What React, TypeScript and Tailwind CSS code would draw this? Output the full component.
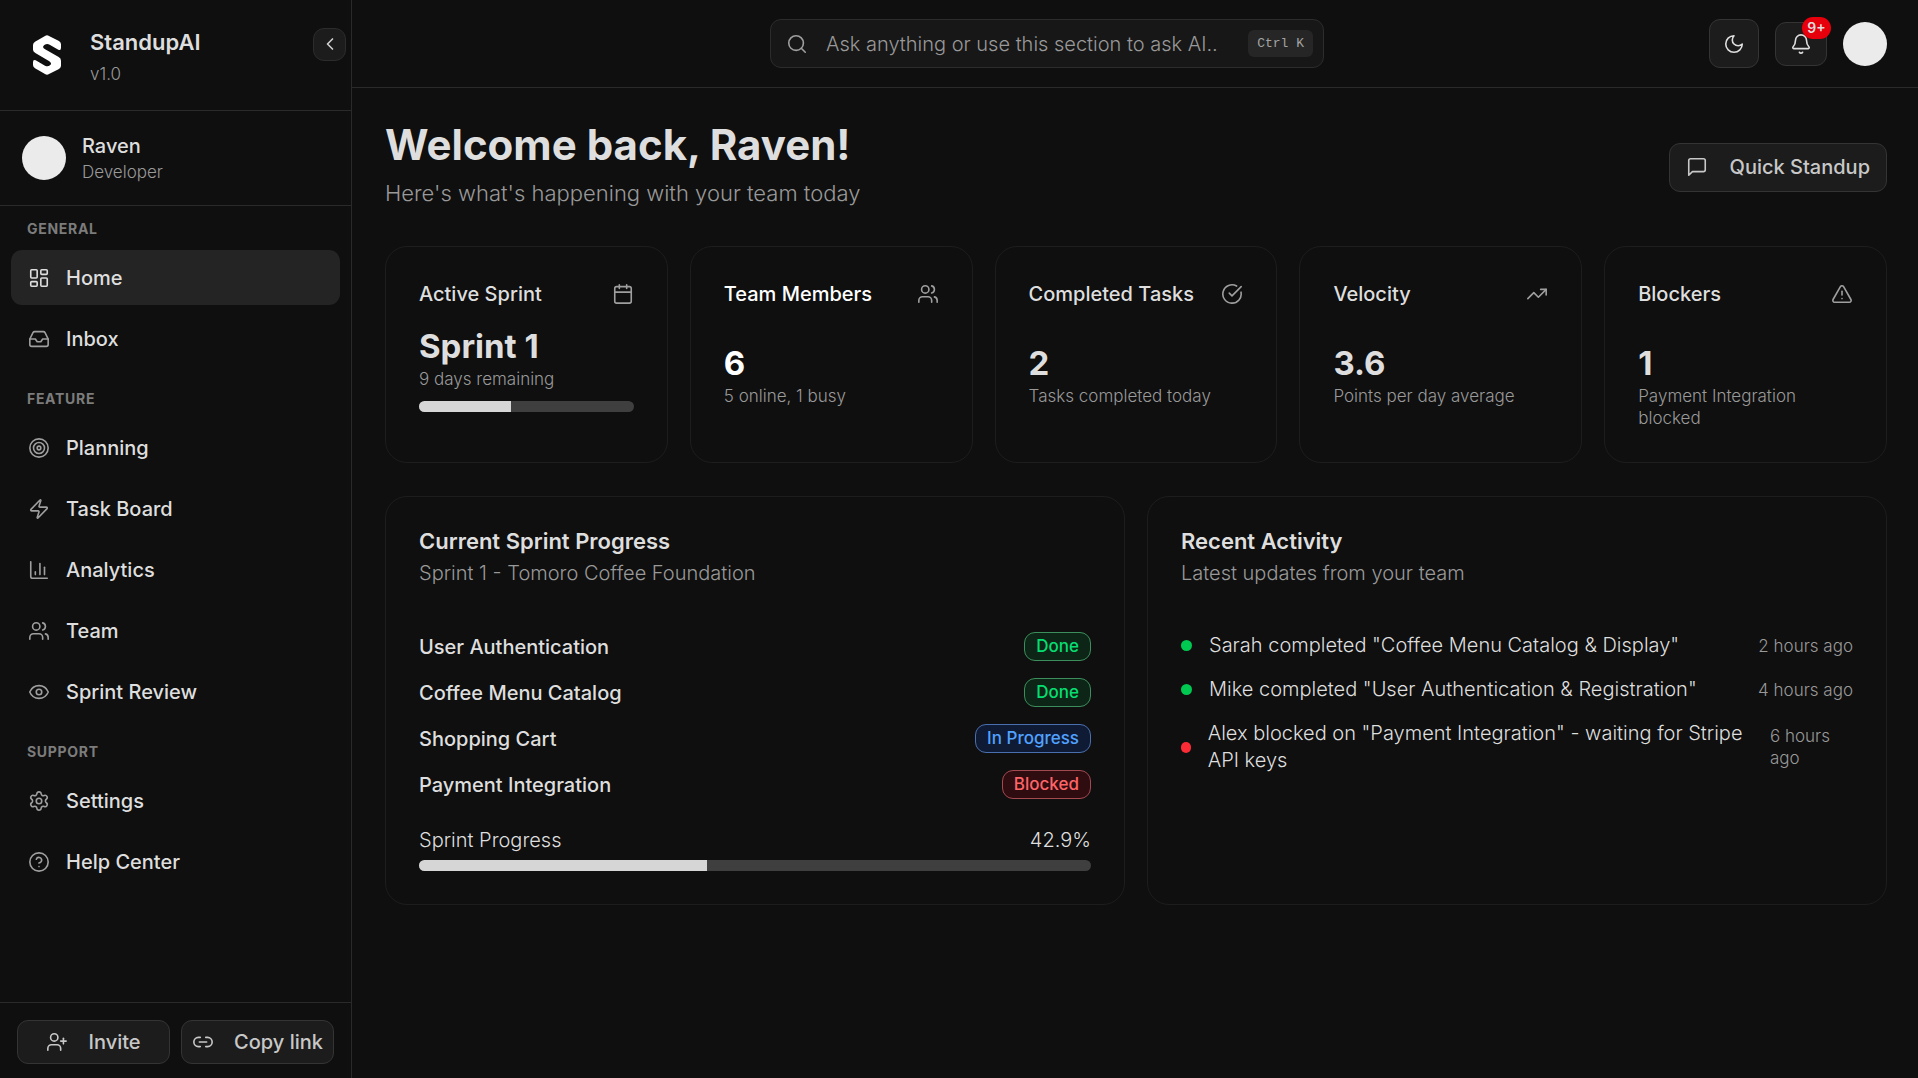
import {
    Bell,
    Calendar,
    ChartColumn,
    ChevronLeft,
    CircleCheckBig,
    CircleQuestionMark,
    Eye,
    Inbox,
    LayoutDashboard,
    Link2,
    Search,
    Settings,
    Target,
    TrendingUp,
    TriangleAlert,
    UserPlus,
    Users,
    Zap,
} from "lucide-react"
import clsx from "clsx"

const navGroups = [
    {
        label: "General",
        items: [
            { name: "Home", icon: LayoutDashboard, active: true },
            { name: "Inbox", icon: Inbox },
        ],
    },
    {
        label: "Feature",
        items: [
            { name: "Planning", icon: Target },
            { name: "Task Board", icon: Zap },
            { name: "Analytics", icon: ChartColumn },
            { name: "Team", icon: Users },
            { name: "Sprint Review", icon: Eye },
        ],
    },
    {
        label: "Support",
        items: [
            { name: "Settings", icon: Settings },
            { name: "Help Center", icon: CircleQuestionMark },
        ],
    },
]

const stats = [
    { title: "Active Sprint", value: "Sprint 1", note: "9 days remaining", icon: Calendar, progress: 42.9 },
    { title: "Team Members", value: "6", note: "5 online, 1 busy", icon: Users, highlighted: true },
    { title: "Completed Tasks", value: "2", note: "Tasks completed today", icon: CircleCheckBig },
    { title: "Velocity", value: "3.6", note: "Points per day average", icon: TrendingUp },
    { title: "Blockers", value: "1", note: "Payment Integration blocked", icon: TriangleAlert },
]

const badgeStyles = {
    Done: "border-[#3c8f5c] bg-[#0d2516] text-[#05df72]",
    "In Progress": "border-[#4a6fae] bg-[#0f1b35] text-[#51a2ff]",
    Blocked: "border-[#a34a50] bg-[#2f0c10] text-[#ff6467]",
}

const tasks: { name: string; status: keyof typeof badgeStyles }[] = [
    { name: "User Authentication", status: "Done" },
    { name: "Coffee Menu Catalog", status: "Done" },
    { name: "Shopping Cart", status: "In Progress" },
    { name: "Payment Integration", status: "Blocked" },
]

const activity = [
    { text: 'Sarah completed "Coffee Menu Catalog & Display"', time: "2 hours ago", dot: "bg-[#00c951]" },
    { text: 'Mike completed "User Authentication & Registration"', time: "4 hours ago", dot: "bg-[#00c951]" },
    { text: 'Alex blocked on "Payment Integration" - waiting for Stripe API keys', time: "6 hours ago", dot: "bg-[#fb2c36]" },
]

function Logo() {
    return (
        <svg viewBox="0 0 84 120" className="h-10 w-7" fill="#fff" aria-hidden="true">
            <path d="M36 3Q42 -1 48 3L78 18Q84 22 84 28V38Q84 48 76 44L50 29Q42 25 34 30Q26 36 35 42L77 66Q84 70 84 77V92Q84 98 78 102L48 117Q42 121 36 117L6 100Q0 96 0 90V82Q0 72 8 76L36 92Q44 96 51 91Q58 85 49 79L7 54Q0 50 0 44V30Q0 24 6 20Z" />
        </svg>
    )
}

function MoonIcon() {
    return (
        <svg viewBox="0 0 24 24" className="size-[22px]" fill="none" stroke="currentColor" strokeWidth="1.75" strokeLinecap="round" strokeLinejoin="round" aria-hidden="true">
            <path d="M12 3a6 6 0 0 0 9 9 9 9 0 1 1-9-9Z" />
        </svg>
    )
}

function MessageIcon() {
    return (
        <svg viewBox="0 0 24 24" className="size-[22px]" fill="none" stroke="currentColor" strokeWidth="1.75" strokeLinecap="round" strokeLinejoin="round" aria-hidden="true">
            <path d="M21 15a2 2 0 0 1-2 2H7l-4 4V5a2 2 0 0 1 2-2h14a2 2 0 0 1 2 2z" />
        </svg>
    )
}

function ProgressBar({ value, label }: { value: number; label: string }) {
    return (
        <div
            role="progressbar"
            aria-label={label}
            aria-valuenow={value}
            className="h-[11px] overflow-hidden rounded-full bg-[#3f3f3f]"
        >
            <div className="h-full bg-[#d6d6d6]" style={{ width: `${value}%` }} />
        </div>
    )
}

function Sidebar() {
    return (
        <aside className="flex w-[352px] shrink-0 flex-col border-r border-[#2a2a2a]">
            <div className="flex h-[111px] items-center border-b border-[#2a2a2a] pl-[33px] pr-[5px]">
                <Logo />
                <div className="ml-[29px] flex-1 pt-[6px]">
                    <div className="text-[22px] leading-[26px] font-semibold">StandupAI</div>
                    <div className="mt-[6px] text-[17px] leading-[26px] text-[#999999]">v1.0</div>
                </div>
                <button
                    aria-label="Collapse sidebar"
                    className="mb-[22px] flex size-[33px] items-center justify-center rounded-[11px] border border-[#2c2c2c] bg-[#1c1c1c] text-[#cfcfcf]"
                >
                    <ChevronLeft size={20} strokeWidth={2} />
                </button>
            </div>
            <div className="flex h-[95px] items-center gap-4 border-b border-[#2a2a2a] px-[22px]">
                <div className="size-11 rounded-full bg-[#ebebeb]" />
                <div className="pt-[2px]">
                    <div className="text-[20px] leading-[26px] font-medium">Raven</div>
                    <div className="text-[17px] leading-[26px] text-[#999999]">Developer</div>
                </div>
            </div>
            <nav className="flex flex-1 flex-col gap-[10px] px-[11px]">
                {navGroups.map((group) => (
                    <div key={group.label}>
                        <h2 className="px-4 pt-[14px] pb-[12px] text-[14px] leading-[18px] font-bold tracking-wider text-[#7c7c7c] uppercase">
                            {group.label}
                        </h2>
                        <ul className="flex flex-col gap-[6px]">
                            {group.items.map((item) => (
                                <li key={item.name}>
                                    <a
                                        href="#"
                                        className={clsx(
                                            "flex h-[55px] items-center gap-4 rounded-[11px] px-[17px] text-[20px] font-medium",
                                            item.active && "bg-[#242424]"
                                        )}
                                    >
                                        <item.icon
                                            size={22}
                                            strokeWidth={1.75}
                                            className={item.active ? "text-[#dedede]" : "text-[#9f9f9f]"}
                                        />
                                        {item.name}
                                    </a>
                                </li>
                            ))}
                        </ul>
                    </div>
                ))}
            </nav>
            <div className="grid grid-cols-2 gap-[11px] border-t border-[#2a2a2a] px-[17px] pt-[17px] pb-[14px] text-[20px] font-medium text-[#c8c8c8]">
                <button className="flex h-11 items-center justify-center gap-5 rounded-[11px] border border-[#343434] bg-[#1c1c1c]">
                    <UserPlus size={22} strokeWidth={1.75} />
                    Invite
                </button>
                <button className="flex h-11 items-center justify-center gap-5 rounded-[11px] border border-[#343434] bg-[#1c1c1c]">
                    <Link2 size={22} strokeWidth={1.75} />
                    Copy link
                </button>
            </div>
        </aside>
    )
}

function Topbar() {
    return (
        <header className="flex h-[88px] items-center justify-between border-b border-[#2a2a2a] pr-[31px] pl-[33px]">
            <div />
            <label className="flex h-[49px] w-[554px] items-center rounded-[11px] border border-[#2c2c2c] bg-[#171717] pr-[10px] pl-[15px]">
                <Search size={22} strokeWidth={1.75} className="shrink-0 text-[#9f9f9f]" />
                <input
                    type="text"
                    aria-label="Ask AI"
                    placeholder="Ask anything or use this section to ask AI.."
                    className="ml-[18px] min-w-0 flex-1 bg-transparent text-[20px] outline-none placeholder:text-[#999999]"
                />
                <kbd className="rounded-md bg-[#262626] px-[9px] font-['Liberation_Mono',monospace] text-[13px] leading-[27px] text-[#a3a3a3]">
                    Ctrl K
                </kbd>
            </label>
            <div className="flex items-center gap-4">
                <button
                    aria-label="Toggle theme"
                    className="flex h-[49px] w-[50px] items-center justify-center rounded-[11px] border border-[#343434] bg-[#1c1c1c]"
                >
                    <MoonIcon />
                </button>
                <button
                    aria-label="Notifications"
                    className="relative flex h-11 w-[52px] items-center justify-center rounded-[11px] border border-[#343434] bg-[#1c1c1c]"
                >
                    <Bell size={22} strokeWidth={1.75} />
                    <span className="absolute -top-[6px] -right-[5px] flex h-[22px] w-[29px] items-center justify-center rounded-full bg-[#e7000b] text-[14px] font-semibold">
                        9+
                    </span>
                </button>
                <div className="size-11 rounded-full bg-[#ebebeb]" />
            </div>
        </header>
    )
}

export default function App() {
    return (
        <div className="flex min-h-screen bg-[#0f0f0f] font-['Inter',sans-serif] font-light text-[#dedede]">
            <Sidebar />
            <div className="min-w-0 flex-1">
                <Topbar />
                <main className="flex flex-col gap-[33px] pt-[33px] pr-[31px] pb-[33px] pl-[33px]">
                    <div className="flex items-center justify-between">
                        <div>
                            <h1 className="text-[42px] leading-[48px] font-bold">Welcome back, Raven!</h1>
                            <p className="mt-[6px] mb-[2px] text-[22px] leading-9 text-[#999999]">
                                Here's what's happening with your team today
                            </p>
                        </div>
                        <button className="flex h-[49px] items-center gap-[22px] rounded-[11px] border border-[#343434] bg-[#1c1c1c] px-4 text-[20px] font-medium text-[#c8c8c8]">
                            <MessageIcon />
                            Quick Standup
                        </button>
                    </div>

                    <div className="grid grid-cols-5 gap-[22px]">
                        {stats.map((stat) => (
                            <section
                                key={stat.title}
                                className={clsx(
                                    "rounded-[22px] border border-[#1d1d1d] p-[33px]",
                                    stat.highlighted && "text-white"
                                )}
                            >
                                <div className="flex items-center justify-between">
                                    <h3 className="text-[20px] leading-[28px] font-medium">{stat.title}</h3>
                                    <stat.icon size={22} strokeWidth={1.75} className="text-[#9f9f9f]" />
                                </div>
                                <div className={stat.progress ? "mt-4" : "mt-[33px]"}>
                                    <div className="text-[33px] leading-[44px] font-bold">{stat.value}</div>
                                    <p className="text-[17px] leading-[22px] text-[#999999]">{stat.note}</p>
                                    {stat.progress && (
                                        <div className="mt-[11px]">
                                            <ProgressBar value={stat.progress} label={stat.title} />
                                        </div>
                                    )}
                                </div>
                            </section>
                        ))}
                    </div>

                    <div className="grid grid-cols-2 gap-[22px]">
                        <section className="rounded-[22px] border border-[#1d1d1d] p-[33px]">
                            <h3 className="text-[22px] leading-[22px] font-semibold">Current Sprint Progress</h3>
                            <p className="mt-2 text-[20px] leading-[26px] text-[#999999]">Sprint 1 - Tomoro Coffee Foundation</p>
                            <ul className="mt-[46px] flex flex-col gap-[17px]">
                                {tasks.map((task) => (
                                    <li key={task.name} className="flex items-center justify-between">
                                        <span className="text-[20px] leading-[26px] font-medium">{task.name}</span>
                                        <span
                                            className={clsx(
                                                "rounded-[11px] border px-[11px] text-[17px] leading-[27px] font-medium",
                                                badgeStyles[task.status]
                                            )}
                                        >
                                            {task.status}
                                        </span>
                                    </li>
                                ))}
                            </ul>
                            <div className="mt-7 mb-[7px] flex justify-between text-[20px] leading-[26px]">
                                <span>Sprint Progress</span>
                                <span>42.9%</span>
                            </div>
                            <ProgressBar value={42.9} label="Sprint Progress" />
                        </section>

                        <section className="rounded-[22px] border border-[#1d1d1d] p-[33px]">
                            <h3 className="text-[22px] leading-[22px] font-semibold">Recent Activity</h3>
                            <p className="mt-2 text-[20px] leading-[26px] text-[#999999]">Latest updates from your team</p>
                            <ul className="mt-[46px] flex flex-col gap-[17px]">
                                {activity.map((entry) => (
                                    <li key={entry.text} className="flex items-center gap-[17px]">
                                        <span className={clsx("size-[11px] rounded-full", entry.dot)} />
                                        <span className="flex-auto text-[20px] leading-[27px]">{entry.text}</span>
                                        <span className="text-[17px] leading-[22px] text-[#999999]">{entry.time}</span>
                                    </li>
                                ))}
                            </ul>
                        </section>
                    </div>
                </main>
            </div>
        </div>
    )
}
